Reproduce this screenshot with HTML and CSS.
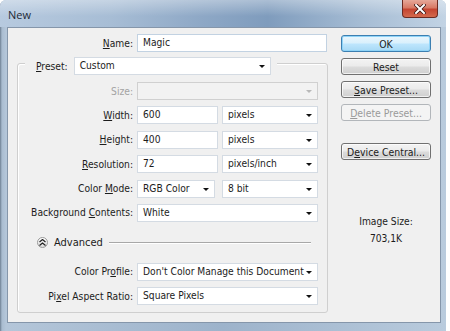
FILE: index.html
```html
<!DOCTYPE html>
<html>
  <head>
    <meta charset="utf-8" />
    <link rel="stylesheet" href="styles.css">
  </head>
  <body>
    <div class="window">
      <div class="titlebar">
        <span class="title">New</span>
        <div class="close">
          <svg width="12" height="10" viewBox="0 0 12 10">
            <path d="M2 1 L10 9 M10 1 L2 9" stroke="#3b1410" stroke-width="3.6" stroke-linecap="square" />
            <path d="M2 1 L10 9 M10 1 L2 9" stroke="#ffffff" stroke-width="2" stroke-linecap="square" />
          </svg>
        </div>
      </div>
      <div class="client">
        <div class="main">
          <div class="name-row">
            <span class="lbl"><u>N</u>ame:</span>
            <div class="box text wide">Magic</div>
          </div>
          <div class="group">
            <div class="legend">
              <span class="lbl"><u>P</u>reset:</span>
              <div class="box select preset">Custom<i class="arrow"></i></div>
            </div>
            <div class="form">
              <span class="lbl off">Size:</span>
              <div class="fields"><div class="box select disabled full"><i class="arrow"></i></div></div>

              <span class="lbl"><u>W</u>idth:</span>
              <div class="fields">
                <div class="box text num">600</div>
                <div class="box select unit">pixels<i class="arrow"></i></div>
              </div>

              <span class="lbl"><u>H</u>eight:</span>
              <div class="fields">
                <div class="box text num">400</div>
                <div class="box select unit">pixels<i class="arrow"></i></div>
              </div>

              <span class="lbl"><u>R</u>esolution:</span>
              <div class="fields">
                <div class="box text num">72</div>
                <div class="box select unit">pixels/inch<i class="arrow"></i></div>
              </div>

              <span class="lbl">Color <u>M</u>ode:</span>
              <div class="fields">
                <div class="box select mode">RGB Color<i class="arrow"></i></div>
                <div class="box select unit">8 bit<i class="arrow"></i></div>
              </div>

              <span class="lbl">Background <u>C</u>ontents:</span>
              <div class="fields"><div class="box select full">White<i class="arrow"></i></div></div>
            </div>

            <div class="advanced">
              <span class="chevron">
                <svg width="7" height="7" viewBox="0 0 7 7">
                  <path d="M0.5 3 L3.5 0.5 L6.5 3 M0.5 6.5 L3.5 4 L6.5 6.5" fill="none" stroke="#222" stroke-width="1.2" />
                </svg>
              </span>
              <span class="adv-text">Advanced</span>
              <span class="rule"></span>
            </div>

            <div class="form adv-form">
              <span class="lbl">Color Pr<u>o</u>file:</span>
              <div class="fields"><div class="box select full">Don't Color Manage this Document<i class="arrow"></i></div></div>

              <span class="lbl">Pi<u>x</u>el Aspect Ratio:</span>
              <div class="fields"><div class="box select full">Square Pixels<i class="arrow"></i></div></div>
            </div>
          </div>
        </div>

        <div class="side">
          <button class="btn default">OK</button>
          <button class="btn">Reset</button>
          <button class="btn"><u>S</u>ave Preset...</button>
          <button class="btn" disabled><u>D</u>elete Preset...</button>
          <button class="btn central">D<u>e</u>vice Central...</button>
          <div class="info">
            <span>Image Size:</span>
            <span>703,1K</span>
          </div>
        </div>
      </div>
    </div>
  </body>
</html>
```

FILE: styles.css
```css
/* New document dialog */
body {
  margin: 0;
  background: #ffffff;
  font-family: "DejaVu Sans Condensed", "DejaVu Sans", sans-serif;
  font-size: 10.2px;
  color: #1c1c1c;
}

u {
  text-decoration: underline;
  text-underline-offset: 1px;
}

.window {
  width: 446px;
  height: 331px;
  background: linear-gradient(to right, #6d7f92 0px, #a9bcd0 2px, #b4c6d9 6px, #9db3cb 50%, #b9cbdd 100%);
  border-radius: 6px 6px 0 0;
  display: flex;
  flex-direction: column;
}

/* title bar */
.titlebar {
  height: 27px;
  display: flex;
  justify-content: space-between;
  align-items: flex-start;
  padding: 0 8px 0 8px;
  background:
    linear-gradient(to bottom, rgba(255, 255, 255, 0.35), rgba(255, 255, 255, 0) 60%),
    linear-gradient(to right, #b7cadf 0%, #a7bdd5 25%, #8ea8c6 45%, #7f9cbd 60%, #a4bbd3 80%, #c2d3e4 100%);
  border-radius: 6px 6px 0 0;
}

.title {
  font-family: "Open Sans", sans-serif;
  font-size: 11px;
  color: #1e2a36;
  margin-top: 7px;
}

.close {
  width: 36px;
  height: 18px;
  box-sizing: border-box;
  border: 1px solid #6b2b22;
  border-top: none;
  border-radius: 0 0 4px 4px;
  background: linear-gradient(to bottom, #e6a899 0%, #d87a66 45%, #c44531 55%, #d36a4e 100%);
  display: flex;
  align-items: center;
  justify-content: center;
}

/* client area */
.client {
  margin-left: 7px;
  width: 434px;
  height: 296px;
  box-sizing: border-box;
  background: #f0f0f0;
  border: 1px solid #8596aa;
  display: flex;
  padding: 6px 0 0 9px;
  gap: 13px;
}

.main {
  width: 311px;
  display: flex;
  flex-direction: column;
}

.name-row {
  display: grid;
  grid-template-columns: 116px 190px;
  column-gap: 4px;
  align-items: center;
}

.lbl {
  text-align: right;
  white-space: nowrap;
}

.lbl.off {
  color: #a3a3a3;
}

.box {
  height: 18px;
  box-sizing: border-box;
  background: #ffffff;
  border: 1px solid #d4dbe3;
  padding: 0 5px;
  line-height: 16px;
  white-space: nowrap;
  overflow: hidden;
}

.box.wide {
  border-color: #c2d2e2;
}

.select {
  position: relative;
  padding-right: 14px;
}

.arrow {
  position: absolute;
  right: 5px;
  top: 7px;
  width: 0;
  height: 0;
  border-left: 3px solid transparent;
  border-right: 3px solid transparent;
  border-top: 3px solid #111111;
}

.select.disabled {
  background: #f2f2f2;
  border-color: #d0d0d0;
}

.select.disabled .arrow {
  border-top-color: #b8b8b8;
}

/* group box */
.group {
  margin-top: 11px;
  height: 250px;
  box-sizing: border-box;
  border: 1px solid #cfcfcf;
  border-radius: 3px;
  box-shadow: inset 1px 1px 0 #ffffff;
  display: flex;
  flex-direction: column;
}

.legend {
  margin: -7px 0 0 7px;
  align-self: flex-start;
  display: flex;
  align-items: center;
  gap: 6px;
  padding: 0 6px 0 11px;
  background: #f0f0f0;
}

.preset {
  width: 197px;
}

.form {
  margin-top: 7px;
  display: grid;
  grid-template-columns: 115px 181px;
  column-gap: 4px;
  row-gap: 6.4px;
  align-items: center;
}

.fields {
  display: flex;
  justify-content: space-between;
}

.full {
  width: 181px;
}

.num {
  width: 81px;
}

.unit {
  width: 96px;
}

.mode {
  width: 78px;
}

.advanced {
  margin: 15px 16px 0 19px;
  display: flex;
  align-items: center;
  height: 12px;
}

.chevron {
  width: 11px;
  height: 11px;
  box-sizing: border-box;
  border: 1px solid #9a9a9a;
  border-radius: 50%;
  background: linear-gradient(to bottom, #ffffff, #dcdcdc);
  display: flex;
  align-items: center;
  justify-content: center;
}

.adv-text {
  margin-left: 6px;
  font-size: 11px;
}

.rule {
  margin-left: 6px;
  flex: 1;
  border-top: 1px solid #a8a8a8;
  box-shadow: 0 1px 0 #ffffff;
}

.adv-form {
  margin-top: 14px;
}

/* buttons column */
.side {
  width: 90px;
  display: flex;
  flex-direction: column;
  padding-top: 1px;
  gap: 6px;
}

.btn {
  height: 17px;
  box-sizing: border-box;
  font-family: inherit;
  font-size: 10.4px;
  color: #1c1c1c;
  padding: 0;
  border: 1px solid #707070;
  border-radius: 3px;
  background: linear-gradient(to bottom, #f3f3f3 0%, #ebebeb 48%, #dcdcdc 52%, #cfcfcf 100%);
  box-shadow: inset 0 0 0 1px rgba(255, 255, 255, 0.7);
}

.btn.default {
  border-color: #3c7fb1;
  background: linear-gradient(to bottom, #eaf6fd 0%, #d9f0fc 48%, #bee6fd 52%, #a7d9f5 100%);
  box-shadow: inset 0 0 0 1px #8fd4f8;
}

.btn:disabled {
  color: #9a9a9a;
  border-color: #b2b6ba;
  background: #f4f4f4;
  box-shadow: none;
}

.btn.central {
  margin-top: 16px;
}

.info {
  margin-top: 50px;
  display: flex;
  flex-direction: column;
  align-items: center;
  gap: 6px;
}
```
